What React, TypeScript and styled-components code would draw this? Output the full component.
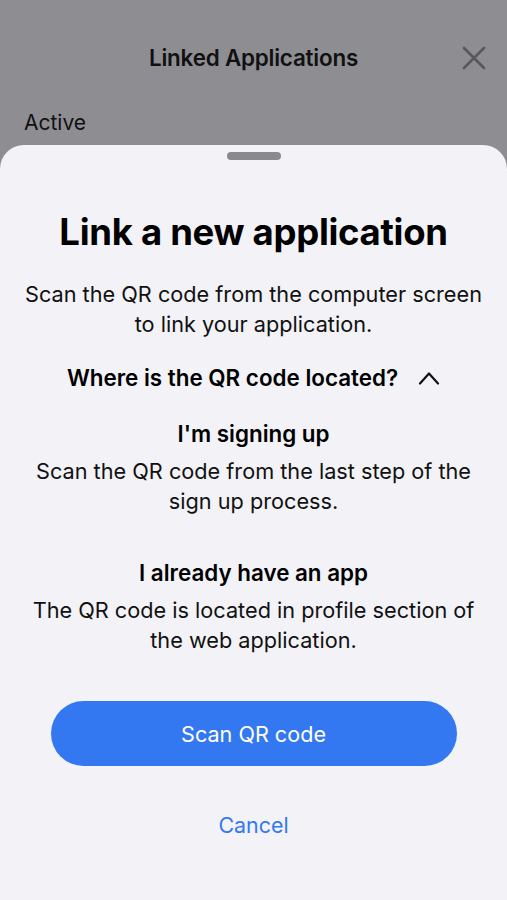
import styled, { createGlobalStyle } from "styled-components";

const GlobalStyle = createGlobalStyle`
  html, body {
    margin: 0;
    padding: 0;
    background: #8e8e92;
  }
  body {
    font-family: Inter, "Noto Sans", sans-serif;
    -webkit-font-smoothing: antialiased;
  }
`;

const Screen = styled.div`
  width: 507px;
  height: 900px;
  display: flex;
  flex-direction: column;
  background: #8e8e92;
  overflow: hidden;
`;

const NavBar = styled.div`
  position: relative;
  height: 58px;
  margin-top: 28px;
  display: flex;
  align-items: center;
  justify-content: center;
`;

const NavTitle = styled.h1`
  margin: 0;
  font-size: 22.4px;
  font-weight: 600;
  color: #111;
  letter-spacing: -0.2px;
`;

const CloseButton = styled.button`
  position: absolute;
  right: 21px;
  top: 18px;
  width: 24px;
  height: 24px;
  padding: 0;
  border: none;
  background: none;
  display: flex;
  align-items: center;
  justify-content: center;
`;

const SectionLabel = styled.div`
  padding: 24px 24px 0;
  font-size: 21px;
  color: #111;
  height: 35px;
`;

const Sheet = styled.div`
  flex: 1;
  background: #f2f2f7;
  border-radius: 24px 24px 0 0;
  display: flex;
  flex-direction: column;
  align-items: center;
  padding: 7px 20px 0;
`;

const Handle = styled.div`
  width: 54px;
  height: 8px;
  border-radius: 4px;
  background: #8a8a8e;
`;

const Heading = styled.h2`
  margin: 52px 0 0;
  font-size: 36.5px;
  font-weight: 700;
  color: #000;
  letter-spacing: -0.3px;
  line-height: 40px;
  white-space: nowrap;
`;

const Paragraph = styled.p<{ $top: number }>`
  margin: ${(p) => p.$top}px 0 0;
  font-size: 21.7px;
  line-height: 30px;
  color: #111;
  text-align: center;
  white-space: nowrap;
`;

const Toggle = styled.div`
  margin-top: 24px;
  display: flex;
  align-items: center;
  gap: 20px;
  font-size: 22.4px;
  font-weight: 600;
  color: #000;
  line-height: 30px;
  white-space: nowrap;
`;

const SubHeading = styled.h3<{ $top: number }>`
  margin: ${(p) => p.$top}px 0 0;
  font-size: 22.4px;
  font-weight: 600;
  color: #000;
  line-height: 30px;
`;

const PrimaryButton = styled.button`
  margin-top: 46px;
  width: 406px;
  height: 65px;
  border: none;
  border-radius: 33px;
  background: #3478f1;
  color: #fff;
  font-family: inherit;
  font-size: 21.6px;
  font-weight: 400;
`;

const LinkButton = styled.button`
  margin-top: 45px;
  border: none;
  background: none;
  color: #3478f1;
  font-family: inherit;
  font-size: 21.4px;
`;

export default function App() {
  return (
    <>
      <GlobalStyle />
      <Screen>
        <NavBar>
          <NavTitle>Linked Applications</NavTitle>
          <CloseButton>
            <svg width="24" height="24" viewBox="0 0 24 24">
              <path
                d="M2 2 L22 22 M22 2 L2 22"
                stroke="#58585c"
                strokeWidth="2.6"
                strokeLinecap="round"
              />
            </svg>
          </CloseButton>
        </NavBar>
        <SectionLabel>Active</SectionLabel>
        <Sheet>
          <Handle />
          <Heading>Link a new application</Heading>
          <Paragraph $top={27}>
            Scan the QR code from the computer screen
            <br />
            to link your application.
          </Paragraph>
          <Toggle>
            Where is the QR code located?
            <svg width="22" height="14" viewBox="0 0 22 14">
              <path
                d="M2 12.5 L11 2.5 L20 12.5"
                fill="none"
                stroke="#111"
                strokeWidth="2.2"
                strokeLinecap="round"
                strokeLinejoin="round"
              />
            </svg>
          </Toggle>
          <SubHeading $top={26}>I'm signing up</SubHeading>
          <Paragraph $top={7}>
            Scan the QR code from the last step of the
            <br />
            sign up process.
          </Paragraph>
          <SubHeading $top={42}>I already have an app</SubHeading>
          <Paragraph $top={7}>
            The QR code is located in profile section of
            <br />
            the web application.
          </Paragraph>
          <PrimaryButton>Scan QR code</PrimaryButton>
          <LinkButton>Cancel</LinkButton>
        </Sheet>
      </Screen>
    </>
  );
}
